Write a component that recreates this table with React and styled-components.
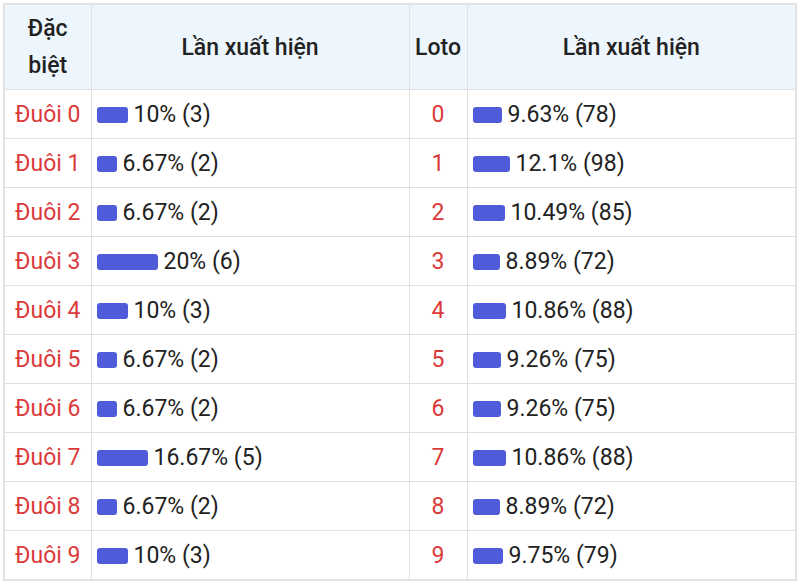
import React from 'react';
import styled, { createGlobalStyle } from 'styled-components';

const GlobalStyle = createGlobalStyle`
    body {
        margin: 0;
        background: #fff;
        font-family: Roboto, "Liberation Sans", sans-serif;
    }
`;

const Wrapper = styled.div`
    padding: 3px 3px 0 3px;
`;

const Table = styled.table`
    width: 794px;
    border-collapse: collapse;
    border: 2px solid #e2e2e2;
    font-size: 23px;
    line-height: 30px;
    color: #222;
    table-layout: fixed;
`;

const HeadCell = styled.th`
    box-sizing: border-box;
    background-color: #eef6fd;
    font-weight: 500;
    line-height: 37px;
    padding: 5px 2px 5px 2px;
    border: 1px solid #dfe3e8;
    text-align: center;
    width: ${props => props.w ? props.w + 'px' : 'auto'};
`;

const Cell = styled.td`
    box-sizing: border-box;
    border: 1px solid #e0e0e0;
    padding: 10px 5px 8px 5px;
    height: 49px;
    text-align: ${props => props.align || 'left'};
    color: ${props => props.red ? '#db3a3a' : '#222'};
    white-space: nowrap;
`;

const BarWrap = styled.div`
    display: flex;
    align-items: center;
    gap: 6px;
`;

const Bar = styled.span`
    display: inline-block;
    height: 16px;
    border-radius: 3px;
    background-color: #4f5bd8;
`;

const dacBiet = [
    [10, 3], [6.67, 2], [6.67, 2], [20, 6], [10, 3],
    [6.67, 2], [6.67, 2], [16.67, 5], [6.67, 2], [10, 3],
];

const loto = [
    [9.63, 78], [12.1, 98], [10.49, 85], [8.89, 72], [10.86, 88],
    [9.26, 75], [9.26, 75], [10.86, 88], [8.89, 72], [9.75, 79],
];

const Freq = ({pct, count}) => (
    <BarWrap>
        <Bar style={{width: Math.round(pct * 3.05) + 'px'}} />
        <span>{pct}% ({count})</span>
    </BarWrap>
);

const App = () => {
    return (
        <Wrapper>
            <GlobalStyle />
            <Table>
                <thead>
                    <tr>
                        <HeadCell w={87}>Đặc<br/>biệt</HeadCell>
                        <HeadCell w={318}>Lần xuất hiện</HeadCell>
                        <HeadCell w={58}>Loto</HeadCell>
                        <HeadCell>Lần xuất hiện</HeadCell>
                    </tr>
                </thead>
                <tbody>
                    {
                        dacBiet.map((d, i) => (
                            <tr key={'row-'+i}>
                                <Cell align="center" red>Đuôi {i}</Cell>
                                <Cell><Freq pct={d[0]} count={d[1]} /></Cell>
                                <Cell align="center" red>{i}</Cell>
                                <Cell><Freq pct={loto[i][0]} count={loto[i][1]} /></Cell>
                            </tr>
                        ))
                    }
                </tbody>
            </Table>
        </Wrapper>
    );
}

export default App;
